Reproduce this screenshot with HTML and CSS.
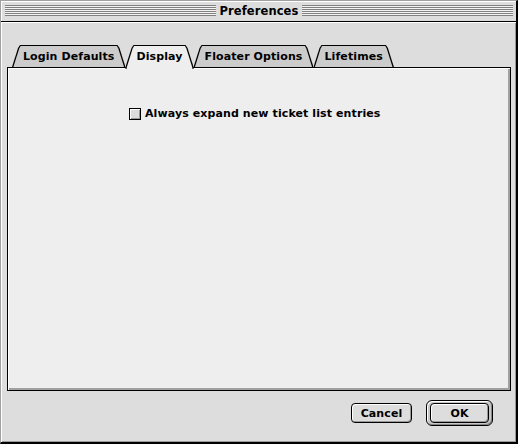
FILE: index.html
```html
<!DOCTYPE html>
<html>
<head>
<meta charset="utf-8">
<link rel="stylesheet" href="styles.css">
</head>
<body>
<div class="window">
  <div class="titlebar">
    <span class="stripes"></span>
    <span class="title">Preferences</span>
    <span class="stripes"></span>
  </div>
  <div class="content">
    <div class="tabs">
      <div class="tab">Login Defaults</div>
      <div class="tab active">Display</div>
      <div class="tab">Floater Options</div>
      <div class="tab">Lifetimes</div>
    </div>
    <div class="panel">
      <label class="check"><span class="box"></span><span>Always expand new ticket list entries</span></label>
    </div>
    <div class="buttons">
      <button class="btn cancel">Cancel</button>
      <div class="ring"><button class="btn ok">OK</button></div>
    </div>
  </div>
</div>
</body>
</html>
```

FILE: styles.css
```css
html, body {
  margin: 0;
  padding: 0;
  background: #dddddd;
}
.window {
  width: 518px;
  height: 444px;
  box-sizing: border-box;
  background: #dddddd;
  border-left: 1px solid #a0a0a0;
  border-top: 1px solid #a0a0a0;
  border-right: 2px solid #000;
  border-bottom: 2px solid #000;
  display: flex;
  flex-direction: column;
  font-family: "DejaVu Sans", "Liberation Sans", sans-serif;
  font-weight: bold;
  font-size: 11px;
  letter-spacing: 0.1px;
  color: #000;
}
.titlebar {
  box-sizing: border-box;
  border-bottom: 1px solid #000;
  height: 21px;
  display: flex;
  align-items: flex-start;
  padding: 4px 3px 0 4px;
  box-shadow: inset 1px 1px #fff;
}
.stripes {
  flex: 1;
  height: 11px;
  background: repeating-linear-gradient(to bottom, #808080 0 1px, #f4f4f4 1px 2px);
}
.title {
  padding: 0 4px 0 4px;
  margin-top: -3px;
  font-size: 11.5px;
  line-height: 18px;
}
.content {
  flex: 1;
  display: flex;
  flex-direction: column;
  padding: 23px 5px 0 6px;
  box-shadow: inset 1px 1px #fff, inset -1px -1px #999;
}
.tabs {
  display: flex;
  height: 22px;
  padding-left: 5px;
  position: relative;
  z-index: 1;
}
.tab {
  position: relative;
  isolation: isolate;
  height: 22px;
  line-height: 22px;
  padding: 1px 11px 0 11px;
  box-sizing: border-box;
  white-space: nowrap;
}
.tab::before,
.tab::after {
  content: "";
  position: absolute;
  inset: 0;
  z-index: -1;
}
.tab::before {
  background: #000;
  clip-path: polygon(0 100%, 6px 3px, 8px 0, calc(100% - 8px) 0, calc(100% - 6px) 3px, 100% 100%);
}
.tab::after {
  background: #cccccc;
  clip-path: polygon(1.4px 100%, 7.2px 3.6px, 8.6px 1px, calc(100% - 8.6px) 1px, calc(100% - 7.2px) 3.6px, calc(100% - 1.4px) 100%);
}
.tab.active {
  height: 24px;
  margin-bottom: -2px;
}
.tab.active::before {
  clip-path: polygon(0 calc(100% - 2px), 6px 3px, 8px 0, calc(100% - 8px) 0, calc(100% - 6px) 3px, 100% calc(100% - 2px), 100% 100%, 0 100%);
}
.tab.active::after {
  background: #eeeeee;
  clip-path: polygon(1.4px calc(100% - 2px), 7.2px 3.6px, 8.6px 1px, calc(100% - 8.6px) 1px, calc(100% - 7.2px) 3.6px, calc(100% - 1.4px) calc(100% - 2px), calc(100% - 1px) 100%, 1px 100%);
}
.panel {
  height: 324px;
  box-sizing: border-box;
  border: 1px solid #000;
  background: #eeeeee;
  box-shadow: inset 1px 1px #fff, inset -2px -2px #a0a0a0;
  padding: 39px 0 0 121px;
}
.check {
  display: flex;
  align-items: center;
  gap: 4px;
  line-height: 14px;
}
.box {
  width: 12px;
  height: 12px;
  box-sizing: border-box;
  border: 1px solid #000;
  background: #dddddd;
  box-shadow: inset 1px 1px #fff, inset -1px -1px #999;
}
.buttons {
  display: flex;
  justify-content: flex-end;
  align-items: center;
  gap: 14px;
  padding: 9px 18px 0 0;
}
.btn {
  font: inherit;
  letter-spacing: inherit;
  color: #000;
  margin: 0;
  padding: 0;
  height: 20px;
  border: 1px solid #000;
  border-radius: 4px;
  background: #dddddd;
  box-shadow: inset 1px 1px #fff, inset -1px -1px #999;
}
.cancel {
  width: 61px;
}
.ring {
  width: 67px;
  height: 26px;
  box-sizing: border-box;
  border: 1px solid #000;
  border-radius: 6px;
  background: #c8c8c8;
  box-shadow: inset 1px 1px #fff, inset -1px -1px #888;
  padding: 2px 3px;
  display: flex;
}
.ok {
  width: 59px;
}
```
